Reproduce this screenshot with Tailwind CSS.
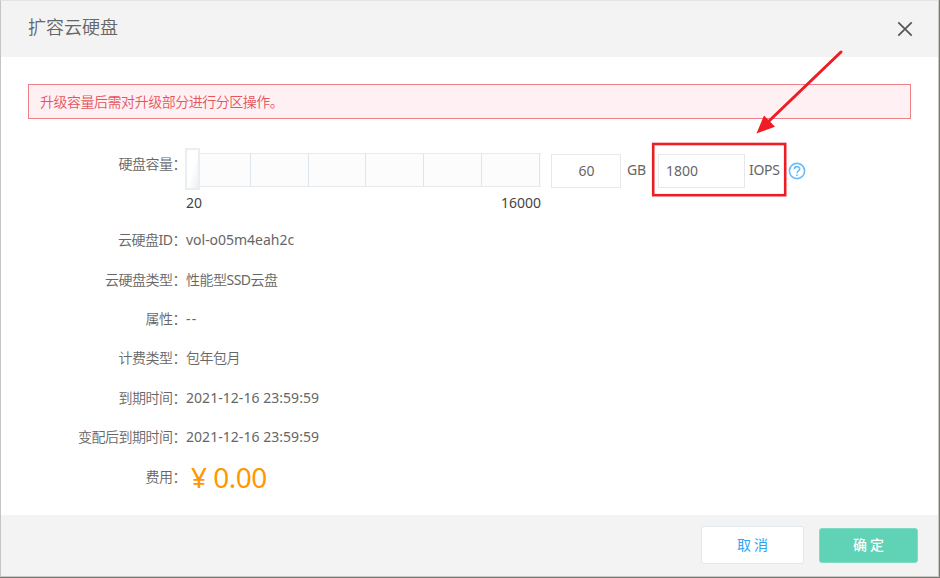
<!DOCTYPE html>
<html lang="zh-CN">
<head>
<meta charset="utf-8">
<title>扩容云硬盘</title>
<script src="https://cdn.jsdelivr.net/npm/@tailwindcss/browser@4"></script>
</head>
<body class="w-[940px] h-[578px] overflow-hidden bg-[#777773] font-['Noto_Sans','Noto_Sans_CJK_SC',sans-serif] text-[14px] text-[#666]">
<div class="relative flex flex-col w-[939px] h-[577px] border border-t-[#e3e3e3] border-l-[#c4c4c4] border-r-[#c9c9c9] border-b-[#c9c9c9] bg-white">
  <header class="h-14 shrink-0 bg-[#f3f3f3] flex items-center justify-between pl-[27px] pr-[25px]">
    <h1 class="text-[18px] leading-6 text-[#666] font-['Noto_Sans_CJK_SC',sans-serif] font-[350] -mt-1.5">扩容云硬盘</h1>
    <svg class="w-4 h-4" viewBox="0 0 16 16" fill="none" stroke="#555" stroke-width="1.7"><path d="M1.3 1.3 14.7 14.7M14.7 1.3 1.3 14.7"/></svg>
  </header>
  <main class="flex-1 pl-[27px] pr-[27px] pt-[27px]">
    <div class="h-[35px] border border-[#ee8086] bg-[#fff0f3] flex items-center pl-[11px] pb-px text-[#e4565d] tracking-[-0.48px] font-[350] font-['Noto_Sans_CJK_SC',sans-serif]">升级容量后需对升级部分进行分区操作。</div>
    <div class="flex h-[101px] pt-[29px]">
      <div class="w-[158px] text-right tracking-[-0.5px] font-[350] leading-[31px] shrink-0">硬盘容量：</div>
      <div class="w-[355px] shrink-0">
        <div class="flex h-[43px] items-center -ml-px">
          <div class="w-[15px] h-[42px] -mt-px border-2 border-[#e9eef3] bg-gradient-to-br from-white from-50% to-[#eef0f3] shrink-0"></div>
          <div class="flex-1 h-[34px] border-y border-[#e8ebed] bg-[#fcfcfc] grid grid-cols-[51px_58px_57px_58px_58px_58px]">
            <i class="border-r border-[#dde5ec]"></i><i class="border-r border-[#dde5ec]"></i><i class="border-r border-[#dde5ec]"></i><i class="border-r border-[#dde5ec]"></i><i class="border-r border-[#dde5ec]"></i><i class="border-r border-[#dde5ec]"></i>
          </div>
        </div>
        <div class="flex justify-between leading-[23px] text-[#444]"><span>20</span><span>16000</span></div>
      </div>
      <div class="flex h-[34px] mt-[6px] ml-[10px] items-center">
        <div class="w-[70px] h-[34px] border border-[#e8e8e8] flex items-center justify-center pb-[2px] pl-px">60</div>
        <span class="ml-[6px] w-[31px] -mt-[4px] tracking-[-0.2px]">GB</span>
        <div class="w-[87px] h-[34px] border border-[#e8e8e8] flex items-center pl-[7px] pb-[2px]">1800</div>
        <span class="ml-[4px] w-[39px] -mt-[4px] tracking-[-0.3px]">IOPS</span>
        <svg class="w-[18px] h-[18px]" viewBox="0 0 18 18" fill="none" stroke="#6bbcfa" stroke-width="1.6"><circle cx="9" cy="9" r="7.6"/><path d="M6.3 7.2C6.3 3.8 11.7 3.8 11.7 7.1 11.7 9 9 9 9 11.2M9 12.5V14"/></svg>
      </div>
    </div>
    <dl class="grid grid-cols-[158px_1fr] auto-rows-[39.4px] items-center font-[350] tracking-[-0.5px]">
      <dt class="text-right">云硬盘<span class="font-normal">ID</span>：</dt><dd class="font-normal tracking-[-0.02px]">vol-o05m4eah2c</dd>
      <dt class="text-right">云硬盘类型：</dt><dd>性能型<span class="font-normal">SSD</span>云盘</dd>
      <dt class="text-right">属性：</dt><dd class="font-normal tracking-[1.2px]">--</dd>
      <dt class="text-right">计费类型：</dt><dd>包年包月</dd>
      <dt class="text-right">到期时间：</dt><dd class="font-normal tracking-[0.04px]">2021-12-16 23:59:59</dd>
      <dt class="text-right">变配后到期时间：</dt><dd class="font-normal tracking-[0.04px]">2021-12-16 23:59:59</dd>
      <dt class="text-right">费用：</dt><dd class="font-normal text-[28px] leading-9 text-[#ff9800] tracking-[-0.5px] pl-[5px] pt-[2px]">¥ 0.00</dd>
    </dl>
  </main>
  <footer class="h-[61px] shrink-0 bg-[#f3f3f3] flex items-center justify-end gap-[15px] pr-[20px] pb-px font-['Noto_Sans_CJK_SC',sans-serif] text-[14px]">
    <button class="w-[103px] h-[38px] pb-[2px] rounded-[3px] border border-[#e1e8ee] bg-white text-[#2ba5f7]">取 消</button>
    <button class="w-[99px] h-[35px] pb-[2px] rounded-[3px] border border-[#7ddcc3] bg-[#60d2b5] text-white font-medium">确 定</button>
  </footer>
  <svg class="absolute left-[-1px] top-[-1px] w-[940px] h-[578px] pointer-events-none" viewBox="0 0 940 578" fill="none">
    <rect x="653.2" y="144" width="132" height="51.2" stroke="#ee1c25" stroke-width="2.6"/>
    <path d="M841 52 768 122" stroke="#ee1c25" stroke-width="3" stroke-linecap="round"/>
    <path d="M756.5 133.5 764 115.5 775 126.8Z" fill="#ee1c25"/>
  </svg>
</div>
</body>
</html>
